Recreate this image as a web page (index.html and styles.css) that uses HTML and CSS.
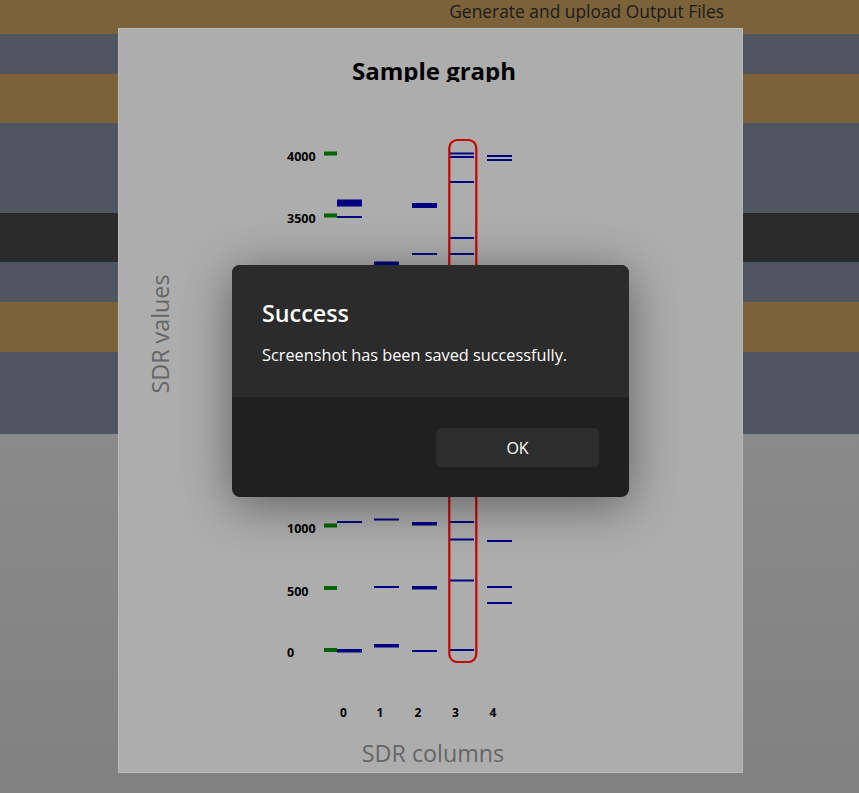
FILE: index.html
```html
<!DOCTYPE html>
<html lang="en">
<head>
<meta charset="utf-8">
<title>Sample graph</title>
<link rel="stylesheet" href="styles.css">
</head>
<body>
<div class="app">
  <header class="topbar"><span class="topbar-text">Generate and upload Output Files</span></header>
  <div class="band slate b40"></div>
  <div class="band brown b49"></div>
  <div class="band slate b90"></div>
  <div class="band dark b49"></div>
  <div class="band slate b40"></div>
  <div class="band brown b50"></div>
  <div class="band slate b82"></div>
  <div class="band rest"></div>
</div>

<section class="graph-window">
  <h2 class="graph-title">Sample graph</h2>
  <svg class="chart" viewBox="119 82 623 690" width="623" height="690" xmlns="http://www.w3.org/2000/svg">
    <text class="axis-title" x="0" y="0" transform="translate(169 334) rotate(-90)" text-anchor="middle">SDR values</text>
    <text class="axis-title" x="433" y="761.5" text-anchor="middle">SDR columns</text>

    <g class="ylabels">
      <text x="287" y="160.5">4000</text>
      <text x="287" y="223">3500</text>
      <text x="287" y="533">1000</text>
      <text x="287" y="595.5">500</text>
      <text x="287" y="656.5">0</text>
    </g>

    <g class="xlabels" text-anchor="middle">
      <text x="343.5" y="717">0</text>
      <text x="380" y="717">1</text>
      <text x="418" y="717">2</text>
      <text x="455.5" y="717">3</text>
      <text x="493" y="717">4</text>
    </g>

    <g class="ladder" fill="#006400">
      <rect x="324" y="151.5" width="13" height="4"/>
      <rect x="324" y="213.5" width="13" height="4"/>
      <rect x="324" y="523.5" width="13" height="4"/>
      <rect x="324" y="586" width="13" height="4"/>
      <rect x="324" y="648" width="13" height="4"/>
    </g>

    <g class="bands" fill="#000080">
      <rect x="337" y="199.5" width="25" height="7"/>
      <rect x="337" y="216" width="25" height="2"/>
      <rect x="337" y="521" width="25" height="2"/>
      <rect x="337" y="649" width="25" height="3.5"/>

      <rect x="374" y="261.5" width="25" height="3.5"/>
      <rect x="374" y="518.5" width="25" height="2"/>
      <rect x="374" y="586" width="25" height="2"/>
      <rect x="374" y="644" width="25" height="3.5"/>

      <rect x="412" y="203" width="25" height="5"/>
      <rect x="412" y="253" width="25" height="2"/>
      <rect x="412" y="522" width="25" height="3.5"/>
      <rect x="412" y="586" width="25" height="3.5"/>
      <rect x="412" y="650" width="25" height="2"/>

      <rect x="449" y="152.5" width="25" height="2"/>
      <rect x="449" y="156" width="25" height="2"/>
      <rect x="449" y="181" width="25" height="2"/>
      <rect x="449" y="237" width="25" height="2"/>
      <rect x="449" y="253" width="25" height="2"/>
      <rect x="449" y="521" width="25" height="2"/>
      <rect x="449" y="538.5" width="25" height="2"/>
      <rect x="449" y="579.5" width="25" height="2"/>
      <rect x="449" y="649" width="25" height="2"/>

      <rect x="487" y="155" width="25" height="2"/>
      <rect x="487" y="159" width="25" height="2"/>
      <rect x="487" y="540" width="25" height="2"/>
      <rect x="487" y="586" width="25" height="2"/>
      <rect x="487" y="602" width="25" height="2"/>
    </g>

    <rect class="highlight" x="449.3" y="140" width="27" height="522" rx="8" ry="8"/>
  </svg>
</section>

<div class="dialog" role="dialog" aria-labelledby="dlg-title">
  <div class="dialog-body">
    <h3 class="dialog-title" id="dlg-title">Success</h3>
    <p class="dialog-text">Screenshot has been saved successfully.</p>
  </div>
  <div class="dialog-footer">
    <button class="dialog-btn" type="button">OK</button>
  </div>
</div>
</body>
</html>
```

FILE: styles.css
```css
html, body {
  margin: 0;
  padding: 0;
}

body {
  width: 859px;
  height: 793px;
  overflow: hidden;
  position: relative;
  font-family: "Open Sans", "Noto Sans", sans-serif;
  background: #868686;
}

.app {
  display: flex;
  flex-direction: column;
  height: 100%;
}

.topbar {
  height: 34px;
  flex: none;
  background: #7b6239;
  display: flex;
  justify-content: flex-end;
  align-items: flex-start;
  padding-right: 135px;
}

.topbar-text {
  font-size: 17.4px;
  line-height: 22px;
  color: #1c1c1c;
}

.band { flex: none; }
.slate { background: #4f5660; }
.brown { background: #7b6239; }
.dark { background: #2b2b2b; }
.b40 { height: 40px; }
.b49 { height: 49px; }
.b50 { height: 50px; }
.b82 { height: 82px; }
.b90 { height: 90px; }
.rest {
  flex: 1;
  background: linear-gradient(#8a8a8a, #818181);
}

.graph-window {
  position: absolute;
  left: 118px;
  top: 28px;
  width: 625px;
  height: 745px;
  box-sizing: border-box;
  border: 1px solid #b9b9b9;
  background: #adadad;
}

.graph-title {
  margin: 25px 0 0;
  padding-left: 7px;
  height: 28px;
  overflow: hidden;
  text-align: center;
  font-size: 24px;
  line-height: 33px;
  font-weight: 700;
  color: #000;
}

.chart {
  display: block;
}

.axis-title {
  font-family: "Open Sans", sans-serif;
  font-size: 23.3px;
  fill: #666666;
}

.ylabels text,
.xlabels text {
  font-family: "Open Sans", sans-serif;
  font-weight: 700;
  fill: #000;
}

.ylabels text { font-size: 12.5px; }
.xlabels text { font-size: 12px; }

.highlight {
  fill: none;
  stroke: #c80000;
  stroke-width: 2.2;
}

.dialog {
  position: absolute;
  left: 232px;
  top: 265px;
  width: 397px;
  height: 232px;
  border-radius: 8px;
  overflow: hidden;
  background: #202020;
  box-shadow: 0 8px 50px rgba(0, 0, 0, 0.45);
  display: flex;
  flex-direction: column;
  color: #fff;
}

.dialog-body {
  height: 132px;
  flex: none;
  box-sizing: border-box;
  padding: 30px 30px 0;
  background: #2b2b2b;
}

.dialog-title {
  margin: 0;
  font-size: 23.3px;
  line-height: 36px;
  font-weight: 600;
}

.dialog-text {
  margin: 14px 0 0;
  font-size: 16.3px;
  line-height: 20px;
  white-space: nowrap;
}

.dialog-footer {
  flex: 1;
  display: flex;
  justify-content: flex-end;
  align-items: flex-start;
  padding: 31px 30px 0;
}

.dialog-btn {
  width: 163px;
  height: 39px;
  border: 0;
  border-radius: 5px;
  background: #2d2d2d;
  color: #fff;
  font-family: "Open Sans", sans-serif;
  font-size: 16px;
  padding: 0;
}
```
